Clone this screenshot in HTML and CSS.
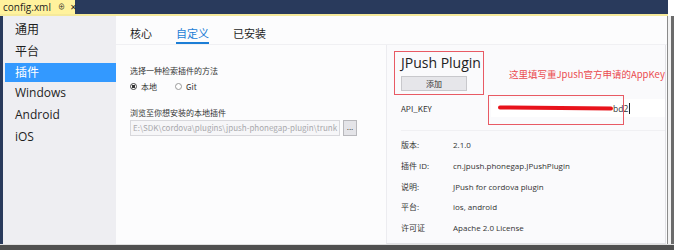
FILE: index.html
```html
<!DOCTYPE html>
<html lang="zh-CN">
<head>
  <meta charset="UTF-8" />
  <title>config.xml</title>
  <link rel="stylesheet" href="styles.css">
</head>
<body>
  <div class="window">
    <div class="titlebar">
      <div class="doc-tab">
        <span class="doc-name">config.xml</span>
        <span class="doc-pin">⊕</span>
        <span class="doc-close">✕</span>
      </div>
    </div>

    <div class="main">
      <div class="edge"></div>

      <ul class="sidebar">
        <li>通用</li>
        <li>平台</li>
        <li class="active">插件</li>
        <li>Windows</li>
        <li>Android</li>
        <li>iOS</li>
      </ul>

      <div class="content">
        <div class="tabs">
          <span class="tab">核心</span>
          <span class="tab current">自定义</span>
          <span class="tab">已安装</span>
        </div>

        <div class="panels">
          <div class="search">
            <p class="caption">选择一种检索插件的方法</p>
            <div class="radios">
              <label class="radio"><span class="dot checked"></span>本地</label>
              <label class="radio"><span class="dot"></span>Git</label>
            </div>
            <p class="caption browse">浏览至你想安装的本地插件</p>
            <div class="path-row">
              <div class="path">E:\SDK\cordova\plugins\jpush-phonegap-plugin\trunk</div>
              <button class="dots">...</button>
            </div>
          </div>

          <div class="plugin">
            <h2 class="plugin-name">JPush Plugin</h2>
            <button class="add-btn">添加</button>

            <div class="key-row">
              <span class="label">API_KEY</span>
              <div class="key-input">
                <span class="scribble"></span>
                <span class="key-tail">bd2</span>
              </div>
            </div>

            <div class="info">
              <div class="info-row"><span class="label">版本:</span><span>2.1.0</span></div>
              <div class="info-row"><span class="label">插件 ID:</span><span>cn.jpush.phonegap.JPushPlugin</span></div>
              <div class="info-row"><span class="label">说明:</span><span>JPush for cordova plugin</span></div>
              <div class="info-row"><span class="label">平台:</span><span>ios, android</span></div>
              <div class="info-row"><span class="label">许可证</span><span>Apache 2.0 License</span></div>
            </div>

            <!-- annotation marks drawn over the screenshot -->
            <div class="mark mark-title"></div>
            <div class="mark mark-key"></div>
            <div class="note">这里填写重Jpush官方申请的AppKey</div>
          </div>
        </div>
      </div>

      <div class="frame-right"></div>
    </div>

    <div class="frame-bottom"></div>
  </div>
</body>
</html>
```

FILE: styles.css
```css
*, *::before, *::after {
  box-sizing: border-box;
  margin: 0;
  padding: 0;
}
html, body {
  width: 674px;
  height: 250px;
  overflow: hidden;
  background: #ffffff;
  font-family: 'Noto Sans CJK SC', 'Open Sans', sans-serif;
  color: #1e1e1e;
}
.window {
  display: flex;
  flex-direction: column;
  height: 250px;
}
.titlebar {
  height: 16px;
  background: #293a5c;
  border-bottom: 2px solid #f5e99a;
  display: flex;
  margin-right: 6px;
}
.doc-tab {
  width: 75px;
  background: #fff29d;
  display: flex;
  align-items: center;
  gap: 5px;
  padding-left: 3px;
  font-family: 'Open Sans', sans-serif;
  font-size: 10px;
  color: #1e1e1e;
  line-height: 14px;
}
.doc-pin {
  font-size: 7px;
  margin-left: 2px;
}
.doc-close {
  font-size: 8px;
}
.main {
  flex: 1;
  display: flex;
  min-height: 0;
}
.edge {
  width: 3px;
  background: #293a5c;
}
.sidebar {
  list-style: none;
  width: 113px;
  background: #eeeef2;
  padding-top: 3px;
  font-size: 12px;
  font-family: 'Open Sans', 'Noto Sans CJK SC', sans-serif;
}
.sidebar li {
  height: 22px;
  line-height: 22px;
  padding-left: 10px;
  margin-left: 2px;
}
.sidebar li.active {
  background: #3399ff;
  color: #ffffff;
  height: 19px;
  line-height: 19px;
}
.content {
  flex: 1;
  display: flex;
  flex-direction: column;
  background: #fcfcfd;
}
.tabs {
  height: 38px;
  display: flex;
  gap: 24px;
  padding: 10px 0 0 14px;
  font-size: 11px;
  border-bottom: 1px solid #f0f0f3;
}
.tab {
  height: 18px;
  line-height: 15px;
}
.tab.current {
  color: #1c7ed6;
  border-bottom: 2px solid #1c7ed6;
}
.panels {
  flex: 1;
  display: flex;
}
.search {
  width: 270px;
  padding: 21px 0 0 14px;
}
.caption {
  font-size: 8px;
  color: #333;
  line-height: 10px;
}
.radios {
  display: flex;
  gap: 18px;
  margin-top: 5px;
  font-size: 8px;
  color: #333;
}
.radio {
  display: flex;
  align-items: center;
  gap: 4px;
}
.dot {
  width: 7px;
  height: 7px;
  border: 1px solid #999;
  border-radius: 50%;
  background: #fff;
}
.dot.checked {
  border-color: #444;
  background: radial-gradient(circle, #333 0 1.6px, #fff 2px);
}
.browse {
  margin-top: 16px;
}
.path-row {
  display: flex;
  align-items: center;
  gap: 3px;
  margin-top: 2px;
}
.path {
  width: 210px;
  height: 16px;
  border: 1px solid #d8d8dc;
  background: #f6f6f8;
  color: #a8a8ac;
  font-size: 8px;
  line-height: 14px;
  padding-left: 2px;
  white-space: nowrap;
  overflow: hidden;
}
.dots {
  width: 14px;
  height: 16px;
  border: 1px solid #b8b8bc;
  background: #e4e4e8;
  font-size: 8px;
  line-height: 8px;
}
.plugin {
  flex: 1;
  position: relative;
  border-left: 1px solid #ececf0;
  background: #fafafc;
  padding: 9px 0 0 14px;
  margin: 0 1px 6px 0;
  border-right: 1px solid #e2e2e6;
  border-bottom: 1px solid #e2e2e6;
}
.plugin-name {
  font-family: 'Open Sans', sans-serif;
  font-weight: 400;
  font-size: 14px;
  line-height: 18px;
  color: #222;
}
.add-btn {
  display: block;
  width: 66px;
  height: 15px;
  margin-top: 4px;
  border: 1px solid #c8c8cc;
  background: #e6e6ea;
  font-family: 'Noto Sans CJK SC', sans-serif;
  font-size: 8px;
  line-height: 13px;
  color: #333;
}
.key-row {
  display: flex;
  align-items: center;
  margin-top: 8px;
  height: 18px;
}
.label {
  width: 52px;
  font-size: 8px;
  color: #333;
}
.key-row .label {
  width: 90px;
}
.key-input {
  flex: 1;
  height: 18px;
  background: #ffffff;
  display: flex;
  align-items: center;
  padding-left: 7px;
}
.scribble {
  width: 115px;
  height: 4px;
  background: #e8131b;
  border-radius: 2px;
  transform: rotate(0.5deg);
}
.key-tail {
  font-size: 8.5px;
  color: #333;
  border-right: 1px solid #222;
  padding-right: 1px;
  font-family: 'Open Sans', sans-serif;
}
.info {
  margin-top: 13px;
  border-top: 1px solid #f0f0f3;
  padding-top: 8px;
}
.info-row {
  display: flex;
  height: 20.8px;
  font-size: 8px;
  font-family: 'Open Sans', 'Noto Sans CJK SC', sans-serif;
  color: #333;
  line-height: 12px;
}
.mark {
  position: absolute;
  border: 1px solid #e85a64;
}
.mark-title {
  left: 7px;
  top: 6px;
  width: 90px;
  height: 44px;
}
.mark-key {
  left: 101px;
  top: 50px;
  width: 136px;
  height: 30px;
}
.note {
  position: absolute;
  left: 122px;
  top: 22px;
  font-size: 9.5px;
  color: #ea4b4f;
  white-space: nowrap;
}
.frame-right {
  width: 7px;
  border-left: 1px solid #8a8a8a;
  background: linear-gradient(90deg, #f2f2f2 0 3px, #6b6b6b 3px);
}
.frame-bottom {
  height: 6px;
  border-top: 1px solid #e0e0e0;
  background: #505050;
}
```
